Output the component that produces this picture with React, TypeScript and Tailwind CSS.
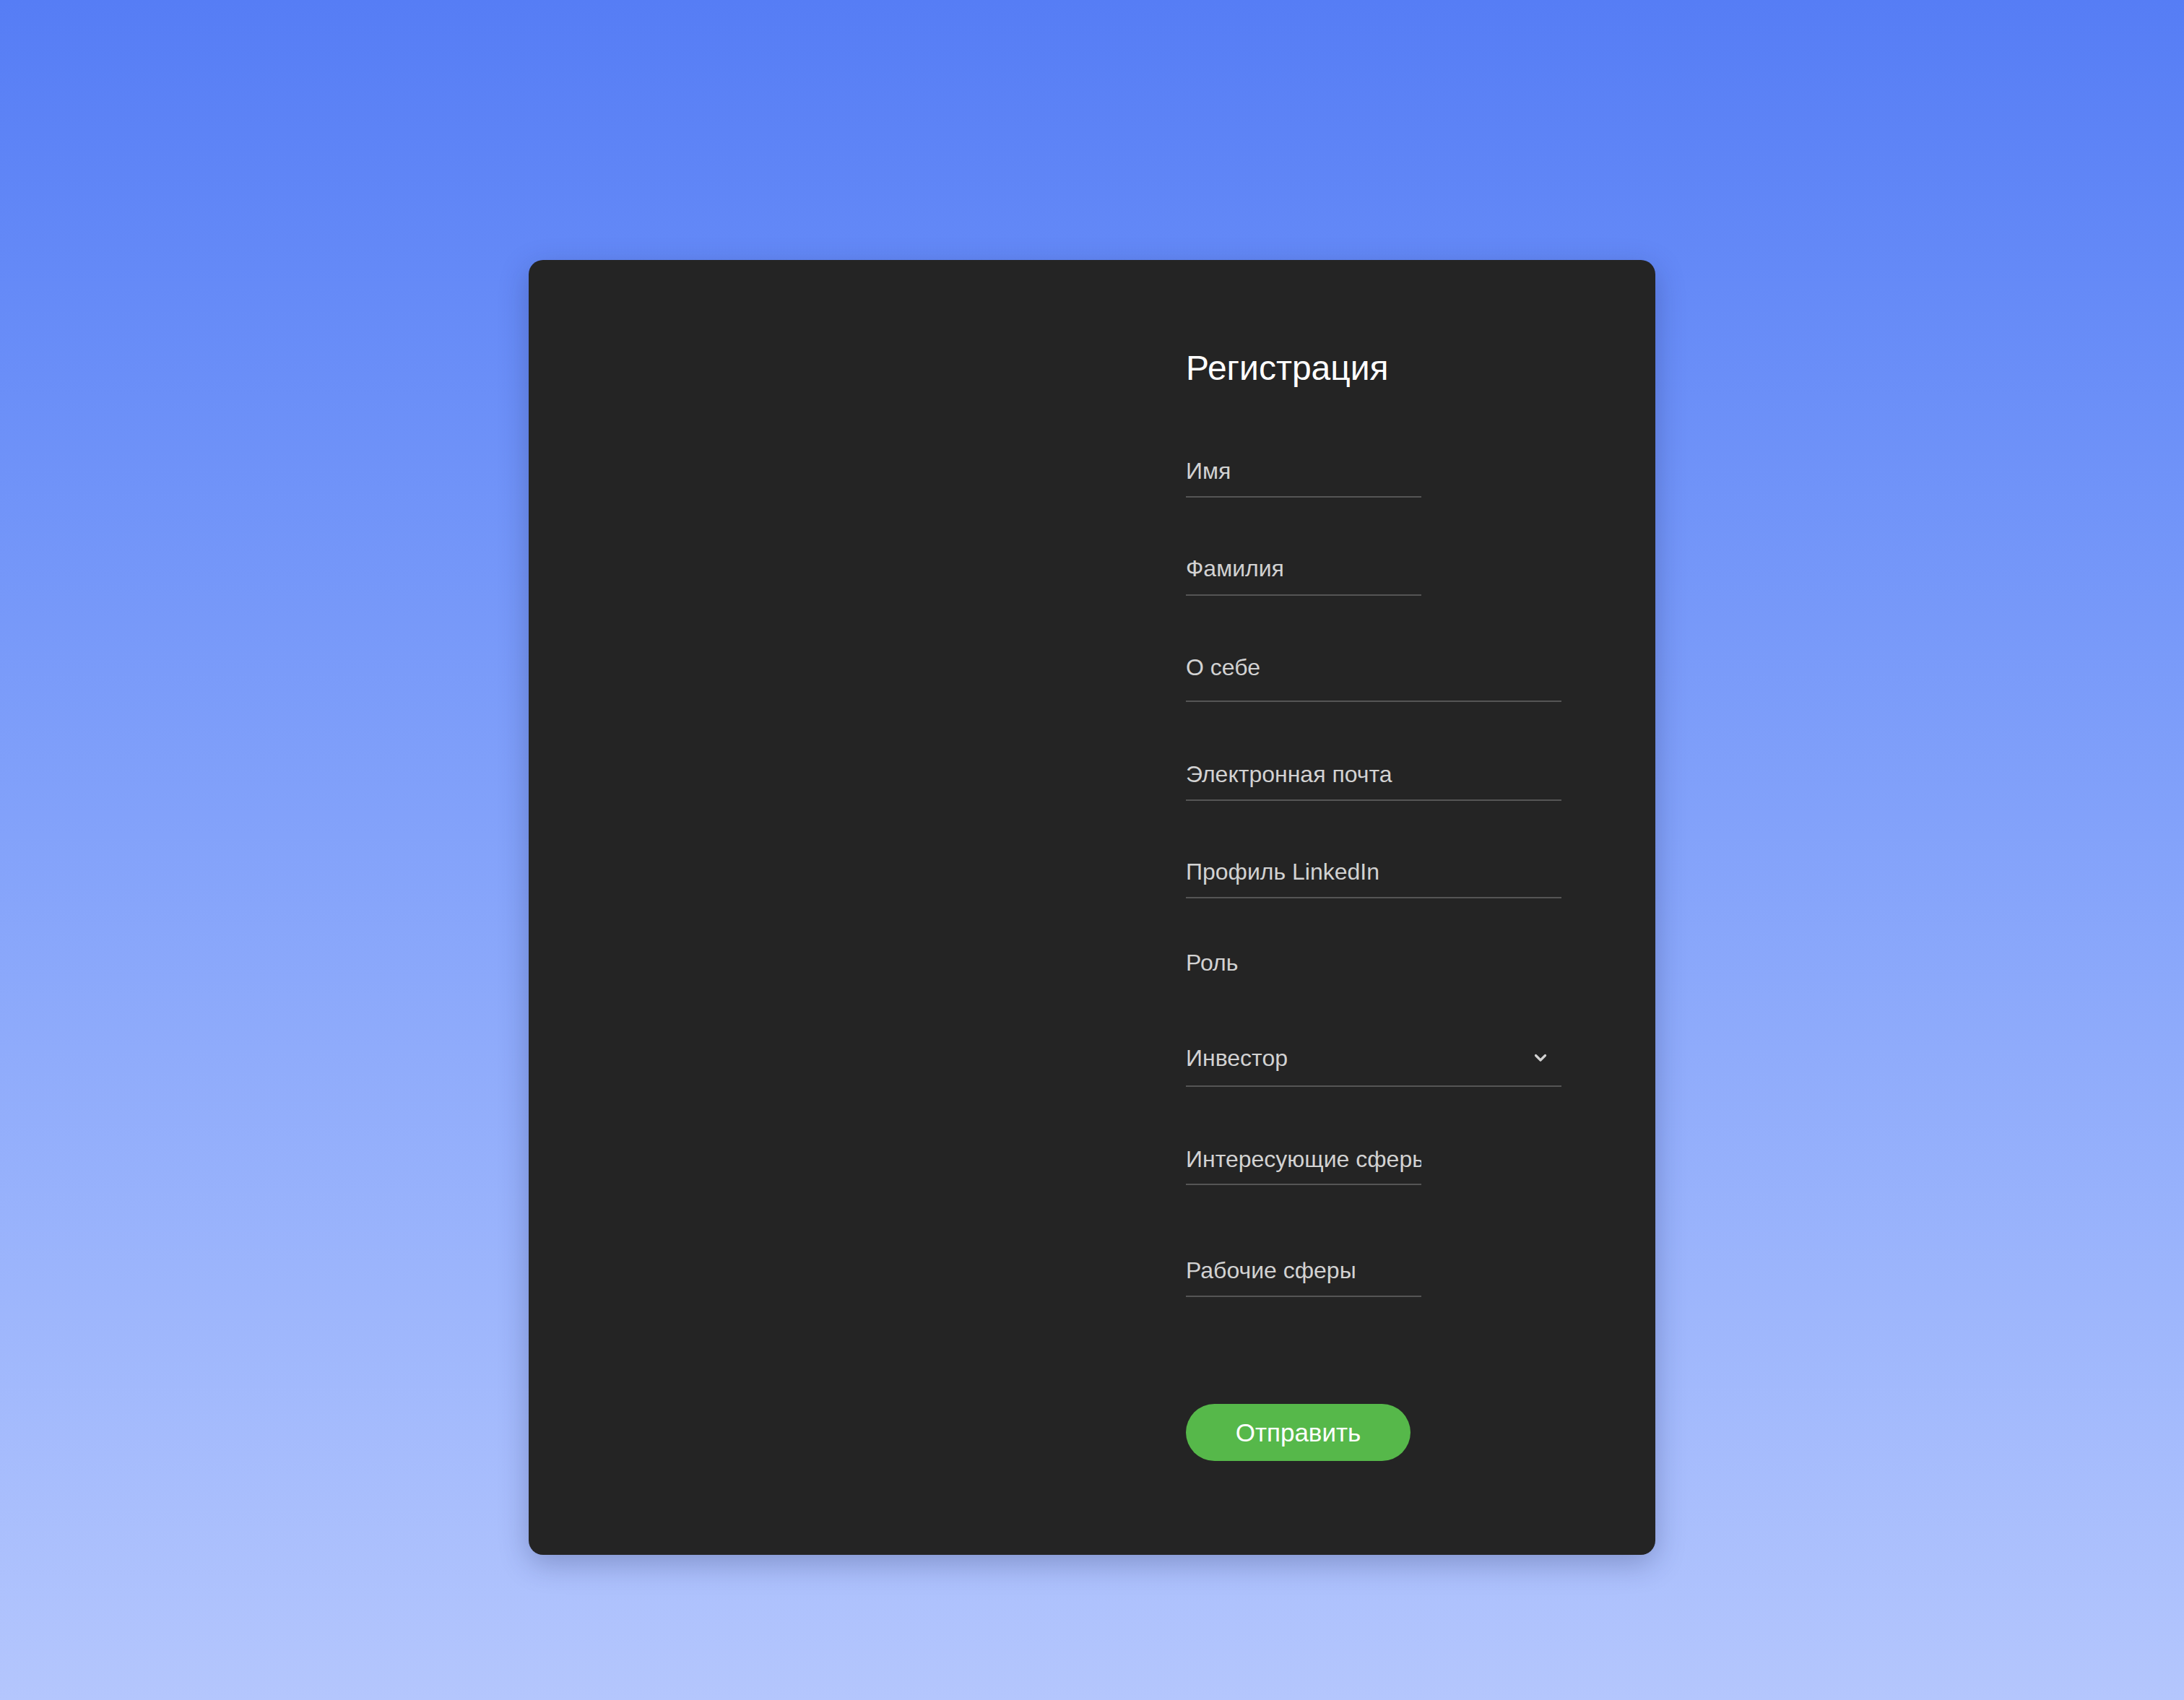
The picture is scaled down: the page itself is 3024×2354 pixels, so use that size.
import React, { useState } from 'react';

const font = { fontFamily: '"Liberation Sans", Arial, sans-serif' };

function Field({ label, wide, clip, className = '', pb = 'pb-[16px]' }: { label: string; wide?: boolean; clip?: boolean; className?: string; pb?: string }) {
  return (
    <div className={`${wide ? 'w-[520px]' : 'w-[326px]'} ${className}`}>
      <div className={`border-b-2 border-[#555555] ${pb}`}>
        <div className={`text-[32px] leading-[38px] text-[#d2d2d2] whitespace-nowrap ${clip ? 'overflow-hidden' : ''}`}>{label}</div>
      </div>
    </div>
  );
}

export default function App() {
  const [role] = useState('Инвестор');

  return (
    <div
      className="min-h-screen w-full bg-gradient-to-b from-[#567df5] to-[#b4c6fd] flex justify-center pt-[360px]"
      style={font}
    >
      <div className="w-[1560px] h-[1793px] bg-[#242424] rounded-[20px] shadow-[0_12px_40px_rgba(20,30,80,0.28)] flex">
        <div className="w-1/2" />
        <div className="w-1/2 pl-[130px] pt-[122px] flex flex-col">
          <h1 className="text-[48px] leading-[56px] text-white font-normal">Регистрация</h1>

          <Field label="Имя" className="mt-[95px]" />
          <Field label="Фамилия" className="mt-[79px]" pb="pb-[17px]" />
          <Field label="О себе" wide className="mt-[80px]" pb="pb-[27px]" />
          <Field label="Электронная почта" wide className="mt-[81px]" />
          <Field label="Профиль LinkedIn" wide className="mt-[79px]" />

          <div className="mt-[70px] text-[32px] leading-[38px] text-[#d2d2d2]">Роль</div>

          <div className="mt-[94px] w-[520px] border-b-2 border-[#555555] pb-[19px] flex items-center justify-between">
            <div className="text-[32px] leading-[38px] text-[#d2d2d2]">{role}</div>
            <svg width="18" height="12" viewBox="0 0 18 12" className="mr-[20px]" fill="none">
              <path d="M2.5 2.5 L9 9 L15.5 2.5" stroke="#d2d2d2" strokeWidth="3.2" strokeLinecap="round" strokeLinejoin="round" />
            </svg>
          </div>

          <Field label="Интересующие сферы" clip className="mt-[81px]" pb="pb-[15px]" />
          <Field label="Рабочие сферы" className="mt-[99px]" />

          <button className="mt-[148px] w-[311px] h-[79px] rounded-full bg-[#56b84a] text-white text-[35px] leading-none">
            Отправить
          </button>
        </div>
      </div>
    </div>
  );
}
